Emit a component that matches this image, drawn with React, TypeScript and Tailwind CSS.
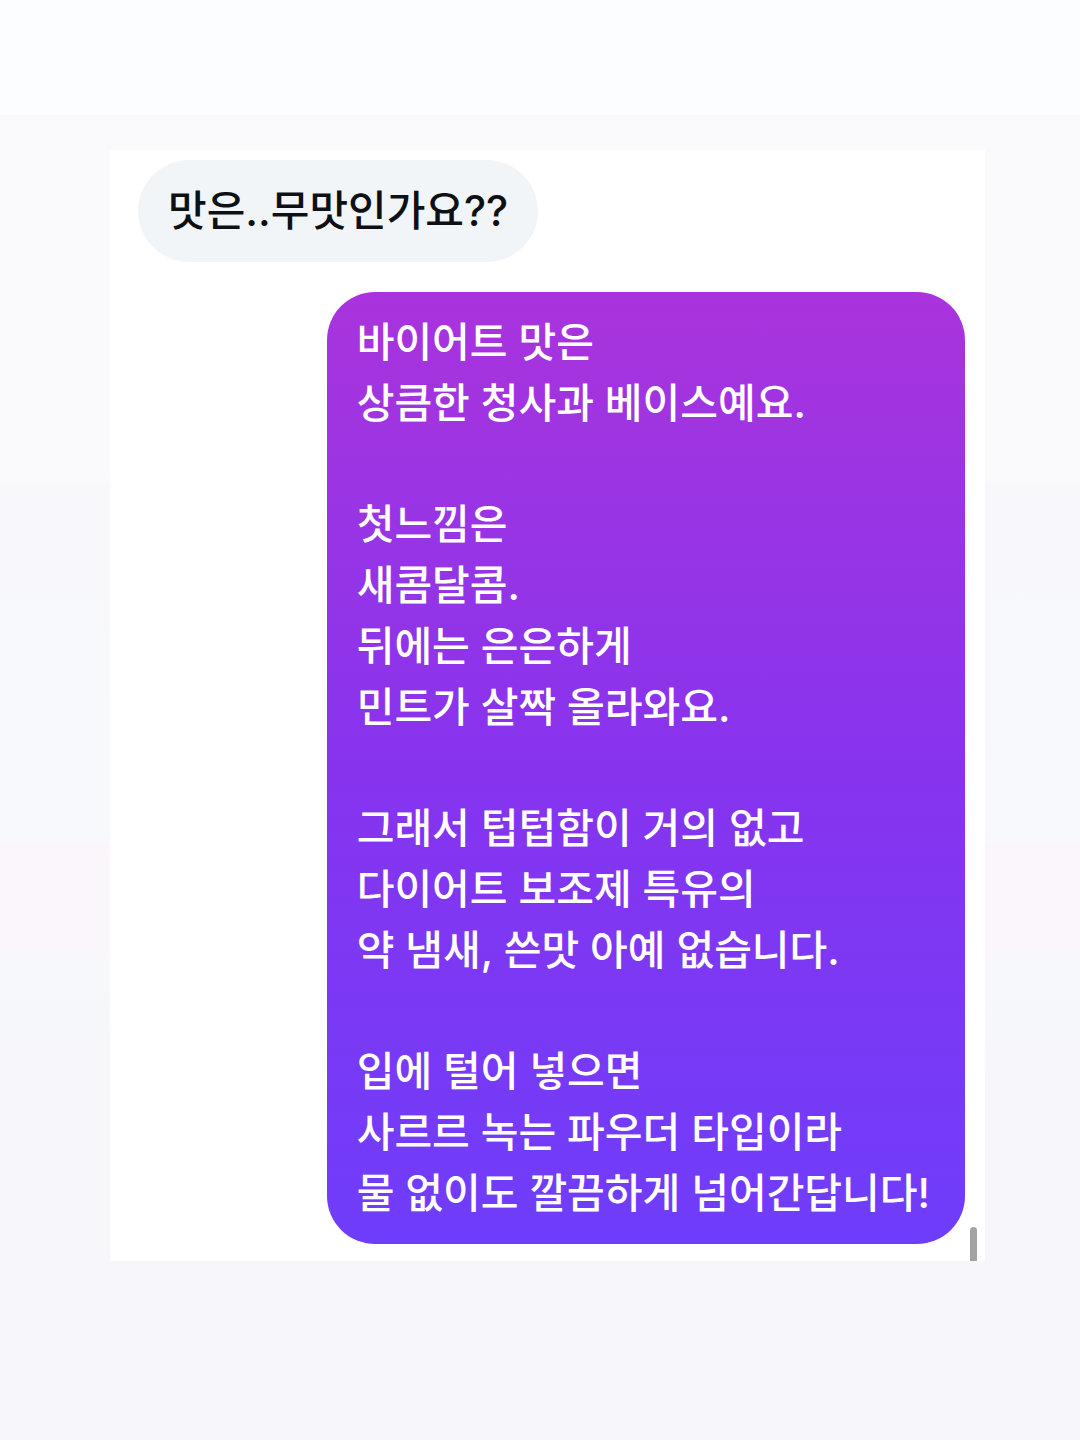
type Message = {
  id: string;
  paragraphs: string[][];
};

const question = "맛은..무맛인가요??";

const answer: Message = {
  id: "answer",
  paragraphs: [
    ["바이어트 맛은", "상큼한 청사과 베이스예요."],
    ["첫느낌은", "새콤달콤.", "뒤에는 은은하게", "민트가 살짝 올라와요."],
    ["그래서 텁텁함이 거의 없고", "다이어트 보조제 특유의", "약 냄새, 쓴맛 아예 없습니다."],
    ["입에 털어 넣으면", "사르르 녹는 파우더 타입이라", "물 없이도 깔끔하게 넘어간답니다!"],
  ],
};

function IncomingBubble({ text }: { text: string }) {
  return (
    <p className="self-start rounded-[51px] bg-[#f2f5f7] px-[30px] py-5 text-[42px] leading-[62px] font-medium text-[#0d1014]">
      {text}
    </p>
  );
}

function OutgoingBubble({ message }: { message: Message }) {
  return (
    <div className="flex flex-col gap-[60px] self-end rounded-[48px] bg-linear-to-b from-[#a933dc] via-[#8733ee] to-[#6e3dfb] py-5 pr-[35px] pl-[30px] text-[41px] leading-[61px] font-medium text-white">
      {message.paragraphs.map((lines) => (
        <div key={lines[0]}>
          {lines.map((line) => (
            <p key={line}>{line}</p>
          ))}
        </div>
      ))}
    </div>
  );
}

export default function App() {
  return (
    <main className="min-h-screen bg-[linear-gradient(to_bottom,#fbfdff_8%,#fafafc_8%,#fafafc_33%,#f8f8fc_34%,#f8f9fc_58%,#faf6fb_59%,#faf6fb_66%,#f7f8fc_67%,#f7f7fb_75%,#f7f6fa_76%)] pt-[150px] pr-[95px] pb-[179px] pl-[110px] font-[Inter,'Noto_Sans_CJK_KR',sans-serif]">
      <section aria-label="대화" className="relative flex flex-col gap-[30px] overflow-hidden bg-white pt-[10px] pr-5 pb-[17px] pl-7">
        <IncomingBubble text={question} />
        <OutgoingBubble message={answer} />
        {/* scroll thumb, cut off by the panel's bottom edge */}
        <span aria-hidden="true" className="absolute right-2 -bottom-2 h-[42px] w-[7px] rounded-full bg-[#a3a3a3]" />
      </section>
    </main>
  );
}
